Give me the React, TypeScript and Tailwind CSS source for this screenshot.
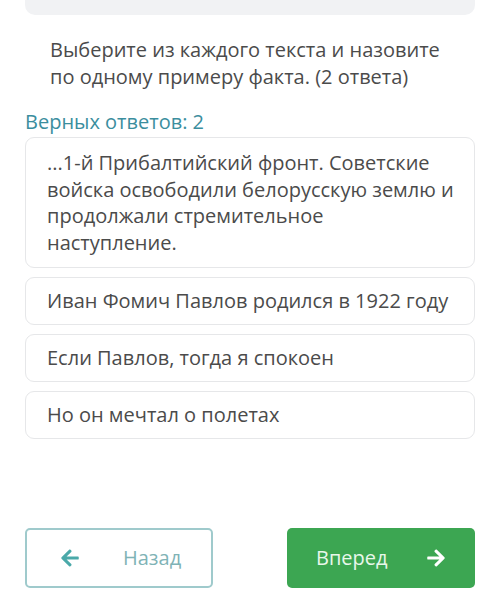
import React from "react";
import { FaArrowLeft, FaArrowRight } from "react-icons/fa";

const options = [
  "Иван Фомич Павлов родился в 1922 году",
  "Если Павлов, тогда я спокоен",
  "Но он мечтал о полетах",
];

export default function App() {
  return (
    <div
      className="w-[500px] h-[611px] bg-white overflow-hidden"
      style={{ fontFamily: '"Open Sans", "Noto Sans", sans-serif' }}
    >
      <div className="mx-[25px] h-[15px] rounded-b-[10px] bg-[#f1f2f4]" />
      <div className="px-[50px] pt-[21px] text-[20px] leading-[27px] text-[#4b4b4b]">
        Выберите из каждого текста и назовите по одному примеру факта. (2 ответа)
      </div>
      <div className="px-[25px] mt-[19px] text-[20px] leading-[26px] text-[#3b8e9e]">
        Верных ответов: 2
      </div>
      <div className="px-[25px] mt-[2px] flex flex-col gap-[9px]">
        <div className="rounded-[9px] border border-[#e6e7e9] pl-[21px] pr-[10px] pt-[12px] pb-[11px] text-[20px] leading-[26.5px] text-[#4b4b4b] whitespace-nowrap">
          ...1-й Прибалтийский фронт. Советские
          <br />
          войска освободили белорусскую землю и
          <br />
          продолжали стремительное
          <br />
          наступление.
        </div>
        {options.map((o) => (
          <div
            key={o}
            className="h-[48px] flex items-center rounded-[9px] border border-[#e6e7e9] pl-[21px] text-[20px] text-[#4b4b4b]"
          >
            {o}
          </div>
        ))}
      </div>
      <div className="px-[25px] mt-[89px] flex justify-between">
        <div className="w-[188px] h-[60px] rounded-[5px] border-2 border-[#9fcacc] flex items-center pl-[33px]">
          <FaArrowLeft className="text-[#4aa9a9] w-[20px] h-[20px]" />
          <span className="ml-[43px] text-[20px] text-[#7fb3b6]">Назад</span>
        </div>
        <div className="w-[188px] h-[60px] rounded-[5px] bg-[#3ca652] flex items-center pl-[29px]">
          <span className="text-[20px] text-[#e8f7ea]">Вперед</span>
          <FaArrowRight className="ml-[38px] text-white w-[20px] h-[20px]" />
        </div>
      </div>
    </div>
  );
}
